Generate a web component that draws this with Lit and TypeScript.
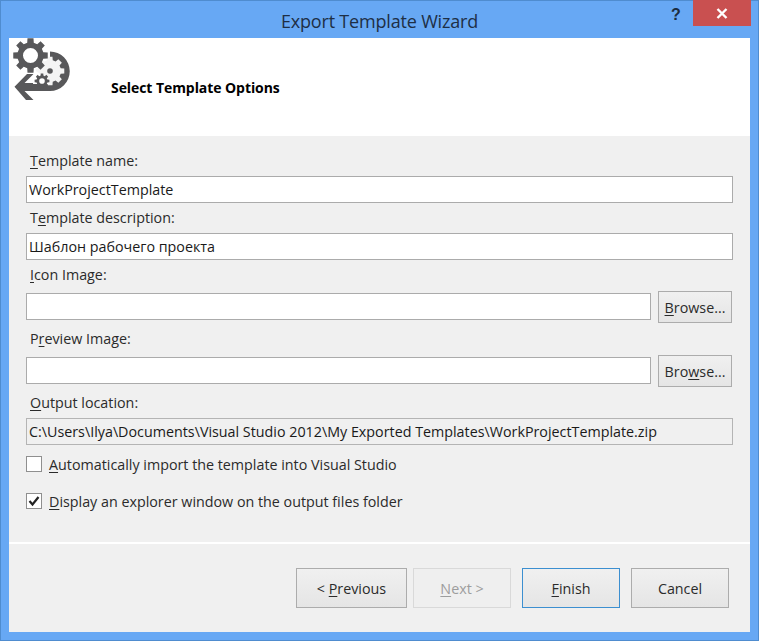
import { LitElement, html, css, svg } from "lit";
import { customElement } from "lit/decorators.js";

function gear(cx: number, cy: number, ro: number, ri: number, teeth: number, hole: number): string {
  const pts: string[] = [];
  const step = (Math.PI * 2) / teeth;
  for (let i = 0; i < teeth; i++) {
    const a = i * step - Math.PI / 2;
    const w = step * 0.22;
    const w2 = step * 0.32;
    const p = (r: number, t: number) => `${(cx + r * Math.cos(t)).toFixed(2)} ${(cy + r * Math.sin(t)).toFixed(2)}`;
    pts.push(p(ri, a - w2), p(ro, a - w), p(ro, a + w), p(ri, a + w2));
  }
  const h = hole;
  return `M${pts.join("L")}Z M${cx - h} ${cy}a${h} ${h} 0 1 0 ${2 * h} 0a${h} ${h} 0 1 0 ${-2 * h} 0Z`;
}

@customElement("app-root")
export class AppRoot extends LitElement {
  static styles = css`
    :host { display: block; width: 759px; height: 641px; font-family: "Open Sans", "Noto Sans", sans-serif; font-size: 14.3px; color: #1a1a1a; }
    * { box-sizing: border-box; }
    .window { width: 759px; height: 641px; background: #67a8f4; border: 1px solid #4f8ccf; display: flex; flex-direction: column; }
    .titlebar { height: 37px; flex: none; display: flex; align-items: flex-start; position: relative; }
    .title { position: absolute; left: 0; right: 0; top: 8px; text-align: center; font-size: 18px; line-height: 24px; color: #1e2f45; letter-spacing: -0.18px; }
    .controls { margin-left: auto; display: flex; margin-right: 7px; }
    .help { width: 28px; height: 26px; margin-right: 3px; text-align: center; font: bold 16px/28px "Liberation Sans", sans-serif; color: #1b2c3f; }
    .close { width: 58px; height: 26px; background: #c95050; display: flex; align-items: center; justify-content: center; margin-top: -1px; }
    .client { flex: none; width: 741px; height: 594px; margin-left: 8px; background: #f0f0f0; display: flex; flex-direction: column; }
    .header { height: 98px; flex: none; background: #fff; display: flex; align-items: flex-start; }
    .header svg { display: block; flex: none; }
    .heading { margin: 40px 0 0 30px; font: bold 14px/20px "Open Sans", sans-serif; color: #000; letter-spacing: -0.07px; }
    .form { flex: none; height: 406px; padding: 15px 17px 0 17px; display: flex; flex-direction: column; }
    .label { height: 20px; line-height: 20px; padding-left: 4px; color: #2b2b2b; white-space: nowrap; }
    .label.gap { margin-top: 5px; }
    .label.wide { margin-top: 6px; }
    u { text-underline-offset: 2px; text-decoration-thickness: 1px; }
    .input { height: 27px; border: 1px solid #ababab; background: #fff; padding-left: 2px; line-height: 25px; color: #1a1a1a; white-space: nowrap; overflow: hidden; margin-top: 5px; }
    .pick { display: flex; align-items: flex-start; height: 32px; margin-top: 6px; padding-right: 1px; gap: 7px; }
    .pick .input { flex: 1; margin-top: 2px; }
    .browse { flex: none; width: 74px; height: 32px; border: 1px solid #acacac; background: linear-gradient(#f0f0f0, #e5e5e5); line-height: 31px; text-align: center; color: #2b2b2b; }
    .readonly { background: #f0f0f0; border-color: #b4b4b4; }
    .check { display: flex; align-items: center; height: 16px; gap: 7px; color: #2b2b2b; white-space: nowrap; }
    .box { width: 16px; height: 16px; flex: none; border: 1px solid #8f8f8f; background: #fff; display: block; }
    .box svg { display: block; }
    .c1 { margin-top: 11px; }
    .c2 { margin-top: 21px; }
    .sep { height: 2px; background: #fff; flex: none; }
    .footer { flex: 1; padding: 24px 21px 0 287px; display: flex; }
    .btn { height: 40px; border: 1px solid #acacac; background: linear-gradient(#f0f0f0, #e5e5e5); line-height: 39px; text-align: center; color: #2b2b2b; flex: none; }
    .prev { width: 111px; }
    .next { width: 98px; margin-left: 6px; border-color: #d9d9d9; background: #efefef; color: #9d9d9d; }
    .finish { width: 98px; margin-left: 11px; border-color: #3c8fd0; }
    .cancel { width: 98px; margin-left: 11px; }
  `;

  render() {
    return html`
      <div class="window">
        <div class="titlebar">
          <div class="title">Export Template Wizard</div>
          <div class="controls">
            <div class="help">?</div>
            <div class="close">
              <svg width="12" height="11" viewBox="0 0 12 11"><path d="M1.5 1 L10.5 10 M10.5 1 L1.5 10" stroke="#fff" stroke-width="2.4" fill="none"/></svg>
            </div>
          </div>
        </div>
        <div class="client">
          <div class="header">
            <svg width="72" height="72" viewBox="9 38 72 72">
              ${svg`
                <path fill="#58585a" d="M50 51.5 A19.5 19.5 0 0 1 50 91 H24.5 L33.5 100 H26 L14.5 86.7 L27 74 H33.5 L24.5 83 H50 Z"/>
                <path fill="#f4f4f4" d=${gear(50, 71, 14.5, 11, 8, 0)}/>
                <circle cx="50" cy="71" r="2.8" fill="#58585a"/>
                <path fill="#ffffff" d="M34 70 L47 78 L50 84 H33 Z"/>
                <path fill="#58585a" fill-rule="evenodd" d=${gear(42, 81, 7.5, 5.6, 8, 2.8)}/>
                <path fill="#58585a" fill-rule="evenodd" d=${gear(30.5, 55.5, 17.5, 13.2, 8, 7.5)}/>
              `}
            </svg>
            <div class="heading">Select Template Options</div>
          </div>
          <div class="form">
            <div class="label"><u>T</u>emplate name:</div>
            <div class="input">WorkProjectTemplate</div>
            <div class="label gap">T<u>e</u>mplate description:</div>
            <div class="input">Шаблон рабочего проекта</div>
            <div class="label gap"><u>I</u>con Image:</div>
            <div class="pick"><div class="input"></div><div class="browse"><u>B</u>rowse...</div></div>
            <div class="label wide">P<u>r</u>eview Image:</div>
            <div class="pick"><div class="input"></div><div class="browse">Bro<u>w</u>se...</div></div>
            <div class="label wide"><u>O</u>utput location:</div>
            <div class="input readonly">C:\\Users\\Ilya\\Documents\\Visual Studio 2012\\My Exported Templates\\WorkProjectTemplate.zip</div>
            <div class="check c1"><span class="box"></span><span><u>A</u>utomatically import the template into Visual Studio</span></div>
            <div class="check c2"><span class="box"><svg width="14" height="14" viewBox="0 0 14 14"><path d="M2.5 7 L5.5 10.5 L11.5 3" stroke="#222" stroke-width="2.2" fill="none"/></svg></span><span><u>D</u>isplay an explorer window on the output files folder</span></div>
          </div>
          <div class="sep"></div>
          <div class="footer">
            <div class="btn prev">&lt; <u>P</u>revious</div>
            <div class="btn next"><u>N</u>ext &gt;</div>
            <div class="btn finish"><u>F</u>inish</div>
            <div class="btn cancel">Cancel</div>
          </div>
        </div>
      </div>
    `;
  }
}
